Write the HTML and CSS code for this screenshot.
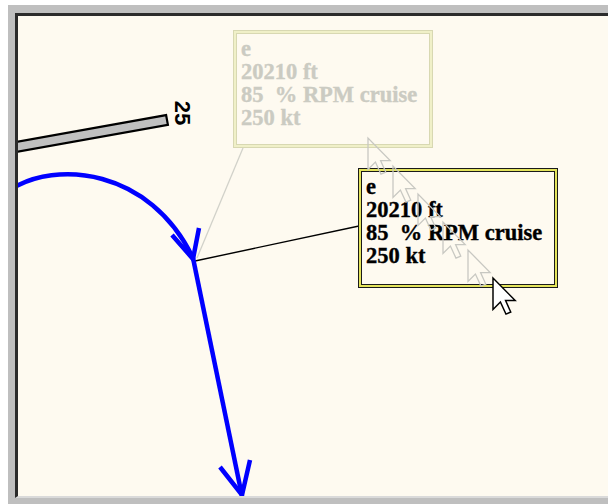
FILE: index.html
```html
<!DOCTYPE html>
<html lang="en">
<head>
  <meta charset="UTF-8" />
  <title>Route map</title>
  <link rel="stylesheet" href="styles.css">
</head>
<body>

  <div class="window">
    <div class="map">

      <!-- runway, route and label leaders -->
      <svg class="layer" viewBox="18 16 590 480" width="590" height="480">
        <polygon class="runway" points="8,153.5 167.9,124.9 166.1,115.1 6.2,143.7" />
        <text class="rwy-num" x="182" y="113" transform="rotate(90 182 113)">25</text>

        <line class="leader-ghost" x1="197" y1="258" x2="243" y2="148" />
        <line class="leader" x1="195" y1="261" x2="359" y2="226" />

        <path class="route" d="M 10 190 C 55 160, 150 168, 193 258" />
        <path class="route" d="M 172 235 L 193 259 L 199 228" />
        <path class="route" d="M 193 258 L 242 496" />
        <path class="route" d="M 220 467 L 242 495 L 250 460" />
      </svg>

      <div class="label ghost">
        <div>e</div>
        <div>20210 ft</div>
        <div>85 &nbsp;% RPM cruise</div>
        <div>250 kt</div>
      </div>

      <div class="label active">
        <div>e</div>
        <div>20210 ft</div>
        <div>85 &nbsp;% RPM cruise</div>
        <div>250 kt</div>
      </div>

      <!-- mouse trail -->
      <svg class="layer" viewBox="18 16 590 480" width="590" height="480">
        <defs>
          <path id="arrow" d="M0 0 V17 L4 13 L7 19.5 L9.6 18.4 L6.8 12.2 L12 12.2 Z" />
        </defs>
        <use class="cursor-ghost" href="#arrow" transform="translate(368 138) scale(1.85)" />
        <use class="cursor-ghost" href="#arrow" transform="translate(393 166) scale(1.85)" />
        <use class="cursor-ghost" href="#arrow" transform="translate(418 194) scale(1.85)" />
        <use class="cursor-ghost" href="#arrow" transform="translate(443 222) scale(1.85)" />
        <use class="cursor-ghost" href="#arrow" transform="translate(468 250) scale(1.85)" />
        <use class="cursor" href="#arrow" transform="translate(493 278) scale(1.85)" />
      </svg>

    </div>
  </div>

</body>
</html>
```

FILE: styles.css
```css
body {
  margin: 5px 0 0 8px;
  background-color: #ffffff;
}

.window {
  background-color: #bfbfbf;
  padding: 8px 0 0 7px;
  height: 491px;
}

.map {
  position: relative;
  overflow: hidden;
  height: 480px;
  background-color: #fefaf0;
  border-top: 3px solid #2b2b2b;
  border-left: 3px solid #2b2b2b;
  border-bottom: 2px solid #dadada;
}

.layer {
  position: absolute;
  top: 0;
  left: 0;
}

.runway {
  fill: #c0c0c0;
  stroke: #000;
  stroke-width: 2.2;
}

.rwy-num {
  font-family: "Liberation Sans", Arial, sans-serif;
  font-weight: bold;
  font-size: 22px;
  text-anchor: middle;
  dominant-baseline: central;
  fill: #000;
}

.route {
  fill: none;
  stroke: #0000ff;
  stroke-width: 4.5;
}

.leader {
  stroke: #000;
  stroke-width: 1.4;
}

.leader-ghost {
  stroke: #d2d2ca;
  stroke-width: 1.3;
}

.label {
  position: absolute;
  box-sizing: border-box;
  width: 200px;
  height: 120px;
  padding: 6px 0 0 7px;
  font-family: "Liberation Serif", "Times New Roman", serif;
  font-weight: bold;
  font-size: 22.5px;
  line-height: 23px;
  white-space: nowrap;
  -webkit-text-stroke: 0.35px currentColor;
  background-color: #fefaf0;
}

.ghost {
  left: 215px;
  top: 14px;
  height: 118px;
  color: #cbcbc2;
  border: 1px solid #d8d8b2;
  box-shadow: inset 0 0 0 2px #f0f0c8, inset 0 0 0 3px #d8d8b2;
}

.active {
  left: 340px;
  top: 152px;
  color: #000;
  border: 1px solid #1a1a1a;
  box-shadow: inset 0 0 0 2px #e4e45c, inset 0 0 0 3px #1a1a1a;
}

.cursor-ghost {
  fill: none;
  stroke: #c8c8c2;
  stroke-width: 0.7;
}

.cursor {
  fill: #fff;
  stroke: #000;
  stroke-width: 0.8;
}
```
